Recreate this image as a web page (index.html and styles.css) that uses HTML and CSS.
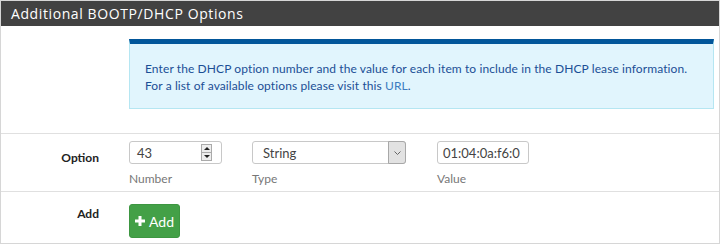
FILE: index.html
```html
<!DOCTYPE html>
<html>
<head>
<meta charset="utf-8">
<link rel="stylesheet" href="styles.css">
</head>
<body>
<div class="panel">
  <div class="panel-heading"><h2 class="panel-title">Additional BOOTP/DHCP Options</h2></div>
  <div class="panel-body">
    <div class="form-row info-row">
      <div class="row-label"></div>
      <div class="row-content">
        <div class="alert">
          Enter the DHCP option number and the value for each item to include in the DHCP lease information.<br>
          For a list of available options please visit this <a class="link" href="#">URL</a>.
        </div>
      </div>
    </div>
    <div class="form-row option-row">
      <div class="row-label">Option</div>
      <div class="row-fields">
        <div class="field field-num">
          <div class="input num-input"><span class="val">43</span><span class="spin"><span class="spin-up"></span><span class="spin-down"></span></span></div>
          <div class="help">Number</div>
        </div>
        <div class="field field-type">
          <div class="input select"><span class="val">String</span><span class="sel-btn"><svg width="9" height="6" viewBox="0 0 9 6"><path d="M1.5 1.5 L4.5 4.5 L7.5 1.5" fill="none" stroke="#666" stroke-width="1"/></svg></span></div>
          <div class="help">Type</div>
        </div>
        <div class="field field-val">
          <div class="input val-input"><span class="val">01:04:0a:f6:0</span></div>
          <div class="help">Value</div>
        </div>
      </div>
    </div>
    <div class="form-row add-row">
      <div class="row-label">Add</div>
      <div class="row-content">
        <button class="btn-add"><svg class="plus" width="10" height="10" viewBox="0 0 10 10"><path d="M3.5 0h3v3.5H10v3H6.5V10h-3V6.5H0v-3h3.5z" fill="#fff"/></svg>Add</button>
      </div>
    </div>
  </div>
</div>
</body>
</html>
```
FILE: styles.css
```css
html, body {
  margin: 0;
  padding: 0;
  background: #fff;
}
body {
  font-family: Lato, "Noto Sans", sans-serif;
  font-size: 12px;
  color: #333;
}
.panel {
  width: 720px;
  height: 244px;
  box-sizing: border-box;
  border: 1px solid #d6d6d6;
  border-bottom: none;
  overflow: hidden;
}
.panel-heading {
  background: #424242;
  height: 25px;
  display: flex;
  align-items: center;
  padding-left: 10px;
}
.panel-title {
  margin: 0;
  font-family: "Open Sans", sans-serif;
  font-weight: normal;
  font-size: 14px;
  letter-spacing: 0.6px;
  color: #fff;
}
.panel-body {
  border-bottom: 1px solid #d6d6d6;
}
.form-row {
  display: flex;
  border-bottom: 1px solid #e0e0e0;
}
.form-row:last-child {
  border-bottom: none;
}
.row-label {
  width: 98px;
  flex: none;
  text-align: right;
  font-weight: bold;
  color: #222;
  padding-right: 30px;
}
.row-content {
  flex: 1;
  padding-right: 5px;
}
.info-row {
  padding: 13px 0 24px;
}
.alert {
  background: #e1f5fd;
  border: 1px solid #b5e6f2;
  border-top: 5px solid #02569a;
  color: #1b4f96;
  padding: 16px 15px 14px 15px;
  line-height: 17px;
  font-size: 12px;
  letter-spacing: 0.1px;
  white-space: nowrap;
}
.link {
  color: #3c7cc0;
  text-decoration: none;
}
.option-row {
  padding: 7px 0 4px;
}
.option-row .row-label {
  padding-top: 5px;
  line-height: 23px;
}
.row-fields {
  display: flex;
}
.field-num { width: 93px; margin-right: 30px; }
.field-type { width: 154px; margin-right: 31px; }
.field-val { width: 92px; }
.input {
  box-sizing: border-box;
  height: 23px;
  border: 1px solid #c8c8c8;
  border-radius: 3px;
  display: flex;
  align-items: center;
  padding-left: 7px;
  position: relative;
  font-size: 13px;
  color: #444;
  overflow: hidden;
  white-space: nowrap;
}
.select {
  padding-left: 10px;
  overflow: visible;
}
.val-input {
  padding-left: 5px;
}
.num-input .spin {
  position: absolute;
  right: 9px;
  top: 2px;
  width: 11px;
  height: 17px;
  border: 1px solid #aaa;
  background: #eee;
  box-sizing: border-box;
  display: flex;
  flex-direction: column;
}
.spin-up, .spin-down {
  flex: 1;
  display: flex;
  align-items: center;
  justify-content: center;
}
.spin-up { border-bottom: 1px solid #aaa; }
.spin-up::after {
  content: "";
  border-left: 3px solid transparent;
  border-right: 3px solid transparent;
  border-bottom: 3px solid #222;
}
.spin-down::after {
  content: "";
  border-left: 3px solid transparent;
  border-right: 3px solid transparent;
  border-top: 3px solid #222;
}
.sel-btn {
  position: absolute;
  right: -1px;
  top: -1px;
  width: 18px;
  height: 23px;
  box-sizing: border-box;
  border: 1px solid #a8a8a8;
  background: #e2e2e2;
  display: flex;
  align-items: center;
  justify-content: center;
  border-radius: 0 3px 3px 0;
}
.help {
  color: #777;
  font-size: 12px;
  margin-top: 7px;
  line-height: 16px;
}
.add-row {
  padding: 12px 0 5px;
}
.add-row .row-label {
  line-height: 20px;
}
.btn-add {
  background: #43a047;
  border: 1px solid #3d9641;
  border-radius: 3px;
  color: #fff;
  font-family: Lato, "Noto Sans", sans-serif;
  font-size: 14px;
  height: 34px;
  width: 51px;
  padding: 0;
  display: flex;
  align-items: center;
  justify-content: center;
  gap: 4px;
}
```
